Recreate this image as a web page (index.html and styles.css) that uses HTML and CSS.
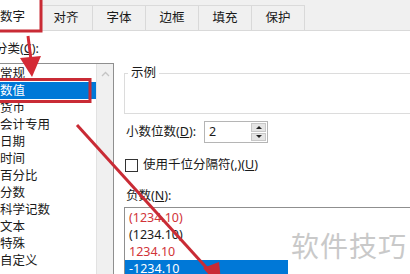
FILE: index.html
```html
<!DOCTYPE html>
<html lang="zh-CN">
<head>
    <meta charset="UTF-8">
    <title>设置单元格格式</title>
    <link rel="stylesheet" href="styles.css">
</head>
<body>

<div class="tabs">
    <div class="tab active">数字</div>
    <div class="tab">对齐</div>
    <div class="tab">字体</div>
    <div class="tab">边框</div>
    <div class="tab">填充</div>
    <div class="tab">保护</div>
</div>

<div class="content">
    <div class="left">
        <div class="label cut">分类(<u>C</u>):</div>
        <div class="category-box">
            <ul class="category-list">
                <li>常规</li>
                <li class="selected">数值</li>
                <li>货币</li>
                <li>会计专用</li>
                <li>日期</li>
                <li>时间</li>
                <li>百分比</li>
                <li>分数</li>
                <li>科学记数</li>
                <li>文本</li>
                <li>特殊</li>
                <li>自定义</li>
            </ul>
            <div class="scrollbar">
                <svg width="15" height="14" viewBox="0 0 15 14"><path d="M4 9 L7.5 5.5 L11 9" fill="none" stroke="#c4c4c4" stroke-width="1.3"/></svg>
            </div>
        </div>
    </div>

    <div class="right">
        <div class="sample">
            <span class="sample-title">示例</span>
        </div>

        <div class="row decimals">
            <span class="label">小数位数(<u>D</u>):</span>
            <div class="spin">
                <span class="spin-value">2</span>
                <div class="spin-buttons">
                    <div class="spin-btn"><svg width="8" height="5" viewBox="0 0 8 5"><path d="M4 1 L7 4 L1 4 Z" fill="#222"/></svg></div>
                    <div class="spin-btn"><svg width="8" height="5" viewBox="0 0 8 5"><path d="M1 1 L7 1 L4 4 Z" fill="#222"/></svg></div>
                </div>
            </div>
        </div>

        <div class="row check">
            <span class="checkbox"></span>
            <span class="label">使用千位分隔符(,)(<u>U</u>)</span>
        </div>

        <div class="label negative-label">负数(<u>N</u>):</div>
        <div class="negative-box">
            <ul class="negative-list">
                <li class="red">(1234.10)</li>
                <li>(1234.10)</li>
                <li class="red">1234.10</li>
                <li class="selected">-1234.10</li>
            </ul>
        </div>
    </div>
</div>

<div class="watermark">软件技巧</div>

<svg class="marks" width="410" height="274" viewBox="0 0 410 274">
    <rect x="-5" y="-5" width="46" height="36" fill="none" stroke="#c92b35" stroke-width="3"/>
    <rect x="-5" y="79.5" width="95" height="22" fill="none" stroke="#c92b35" stroke-width="3"/>
    <line x1="28" y1="36" x2="31" y2="60" stroke="#d42a35" stroke-width="3"/>
    <polygon points="20,58 41,56 32,77" fill="#d42a35"/>
    <line x1="77" y1="125" x2="214" y2="276" stroke="#c92b35" stroke-width="3"/>
    <polygon points="203,268 219,262 222,290" fill="#c92b35"/>
</svg>

</body>
</html>
```

FILE: styles.css
```css
body {
    margin: 0;
    width: 410px;
    height: 274px;
    overflow: hidden;
    position: relative;
    background: #fff;
    color: #1a1a1a;
    font-family: "Noto Sans", "Noto Sans CJK SC", sans-serif;
    font-size: 12.5px;
}
u {
    text-decoration: underline;
    text-underline-offset: 1px;
}
.tabs {
    display: flex;
    height: 30px;
    background: #f0f0f0;
    border-bottom: 1px solid #d9d9d9;
}
.tab {
    width: 53px;
    height: 25px;
    margin-top: 5px;
    line-height: 24px;
    text-align: center;
    border-top: 1px solid #dadada;
    border-right: 1px solid #d9d9d9;
    box-sizing: border-box;
}
.tab.active {
    width: 40px;
    height: 31px;
    margin-top: 0;
    padding-top: 5px;
    text-align: left;
    background: #fff;
    border-top: none;
    border-right: none;
}
.content {
    display: flex;
    height: 243px;
}
.left {
    width: 117px;
    margin-left: -3px;
    flex-shrink: 0;
}
.label {
    line-height: 16px;
}
.cut {
    margin-top: 10px;
    margin-left: -2px;
}
.category-box {
    display: flex;
    margin-top: 6px;
    margin-left: -6px;
    height: 220px;
    border: 1px solid #8f8f8f;
    border-bottom: none;
}
.category-list {
    list-style: none;
    margin: 0;
    padding: 1px 0 0;
    flex: 1;
}
.category-list li {
    height: 17px;
    line-height: 17px;
    padding-left: 8px;
}
.category-list li.selected {
    background: #0078d7;
    color: #fff;
}
.scrollbar {
    width: 16px;
    background: #f0f0f0;
    border-left: 1px solid #e2e2e2;
    display: flex;
    justify-content: center;
    align-items: flex-start;
    padding-top: 3px;
}
.right {
    flex: 1;
    padding-left: 10px;
    min-width: 320px;
}
.sample {
    margin-top: 42px;
    height: 39px;
    border: 1px solid #dcdcdc;
    border-right: none;
}
.sample-title {
    display: inline-block;
    margin: -9px 0 0 3px;
    padding: 0 3px;
    background: #fff;
    line-height: 16px;
    vertical-align: top;
}
.row {
    display: flex;
    align-items: center;
}
.decimals {
    margin-top: 7px;
    padding-left: 2px;
    gap: 8px;
}
.spin {
    display: flex;
    width: 64px;
    height: 22px;
    box-sizing: border-box;
    border: 1px solid #b5b5b5;
}
.spin-value {
    flex: 1;
    padding-left: 4px;
    line-height: 20px;
}
.spin-buttons {
    display: flex;
    flex-direction: column;
    width: 15px;
    padding: 1px 1px 1px 0;
    gap: 1px;
}
.spin-btn {
    flex: 1;
    background: #e5e5e5;
    border: 1px solid #c8c8c8;
    display: flex;
    align-items: center;
    justify-content: center;
}
.check {
    margin-top: 14px;
    padding-left: 1px;
    gap: 5px;
}
.checkbox {
    width: 11px;
    height: 11px;
    border: 1px solid #333;
    background: #fff;
}
.negative-label {
    margin-top: 15px;
    padding-left: 2px;
}
.negative-box {
    margin-top: 3px;
    height: 80px;
    border: 1px solid #8f8f8f;
    border-right: none;
}
.negative-list {
    list-style: none;
    margin: 0;
    padding: 1px 0 0;
    width: 163px;
}
.negative-list li {
    height: 17px;
    line-height: 17px;
    padding-left: 4px;
}
.negative-list li.red {
    color: #d13438;
}
.negative-list li.selected {
    background: #0078d7;
    color: #fff;
}
.watermark {
    position: absolute;
    left: 291px;
    top: 226px;
    font-family: "Noto Sans CJK SC", sans-serif;
    font-size: 28px;
    line-height: 38px;
    color: #c9c9c9;
    letter-spacing: 1px;
}
.marks {
    position: absolute;
    left: 0;
    top: 0;
    pointer-events: none;
}
```
